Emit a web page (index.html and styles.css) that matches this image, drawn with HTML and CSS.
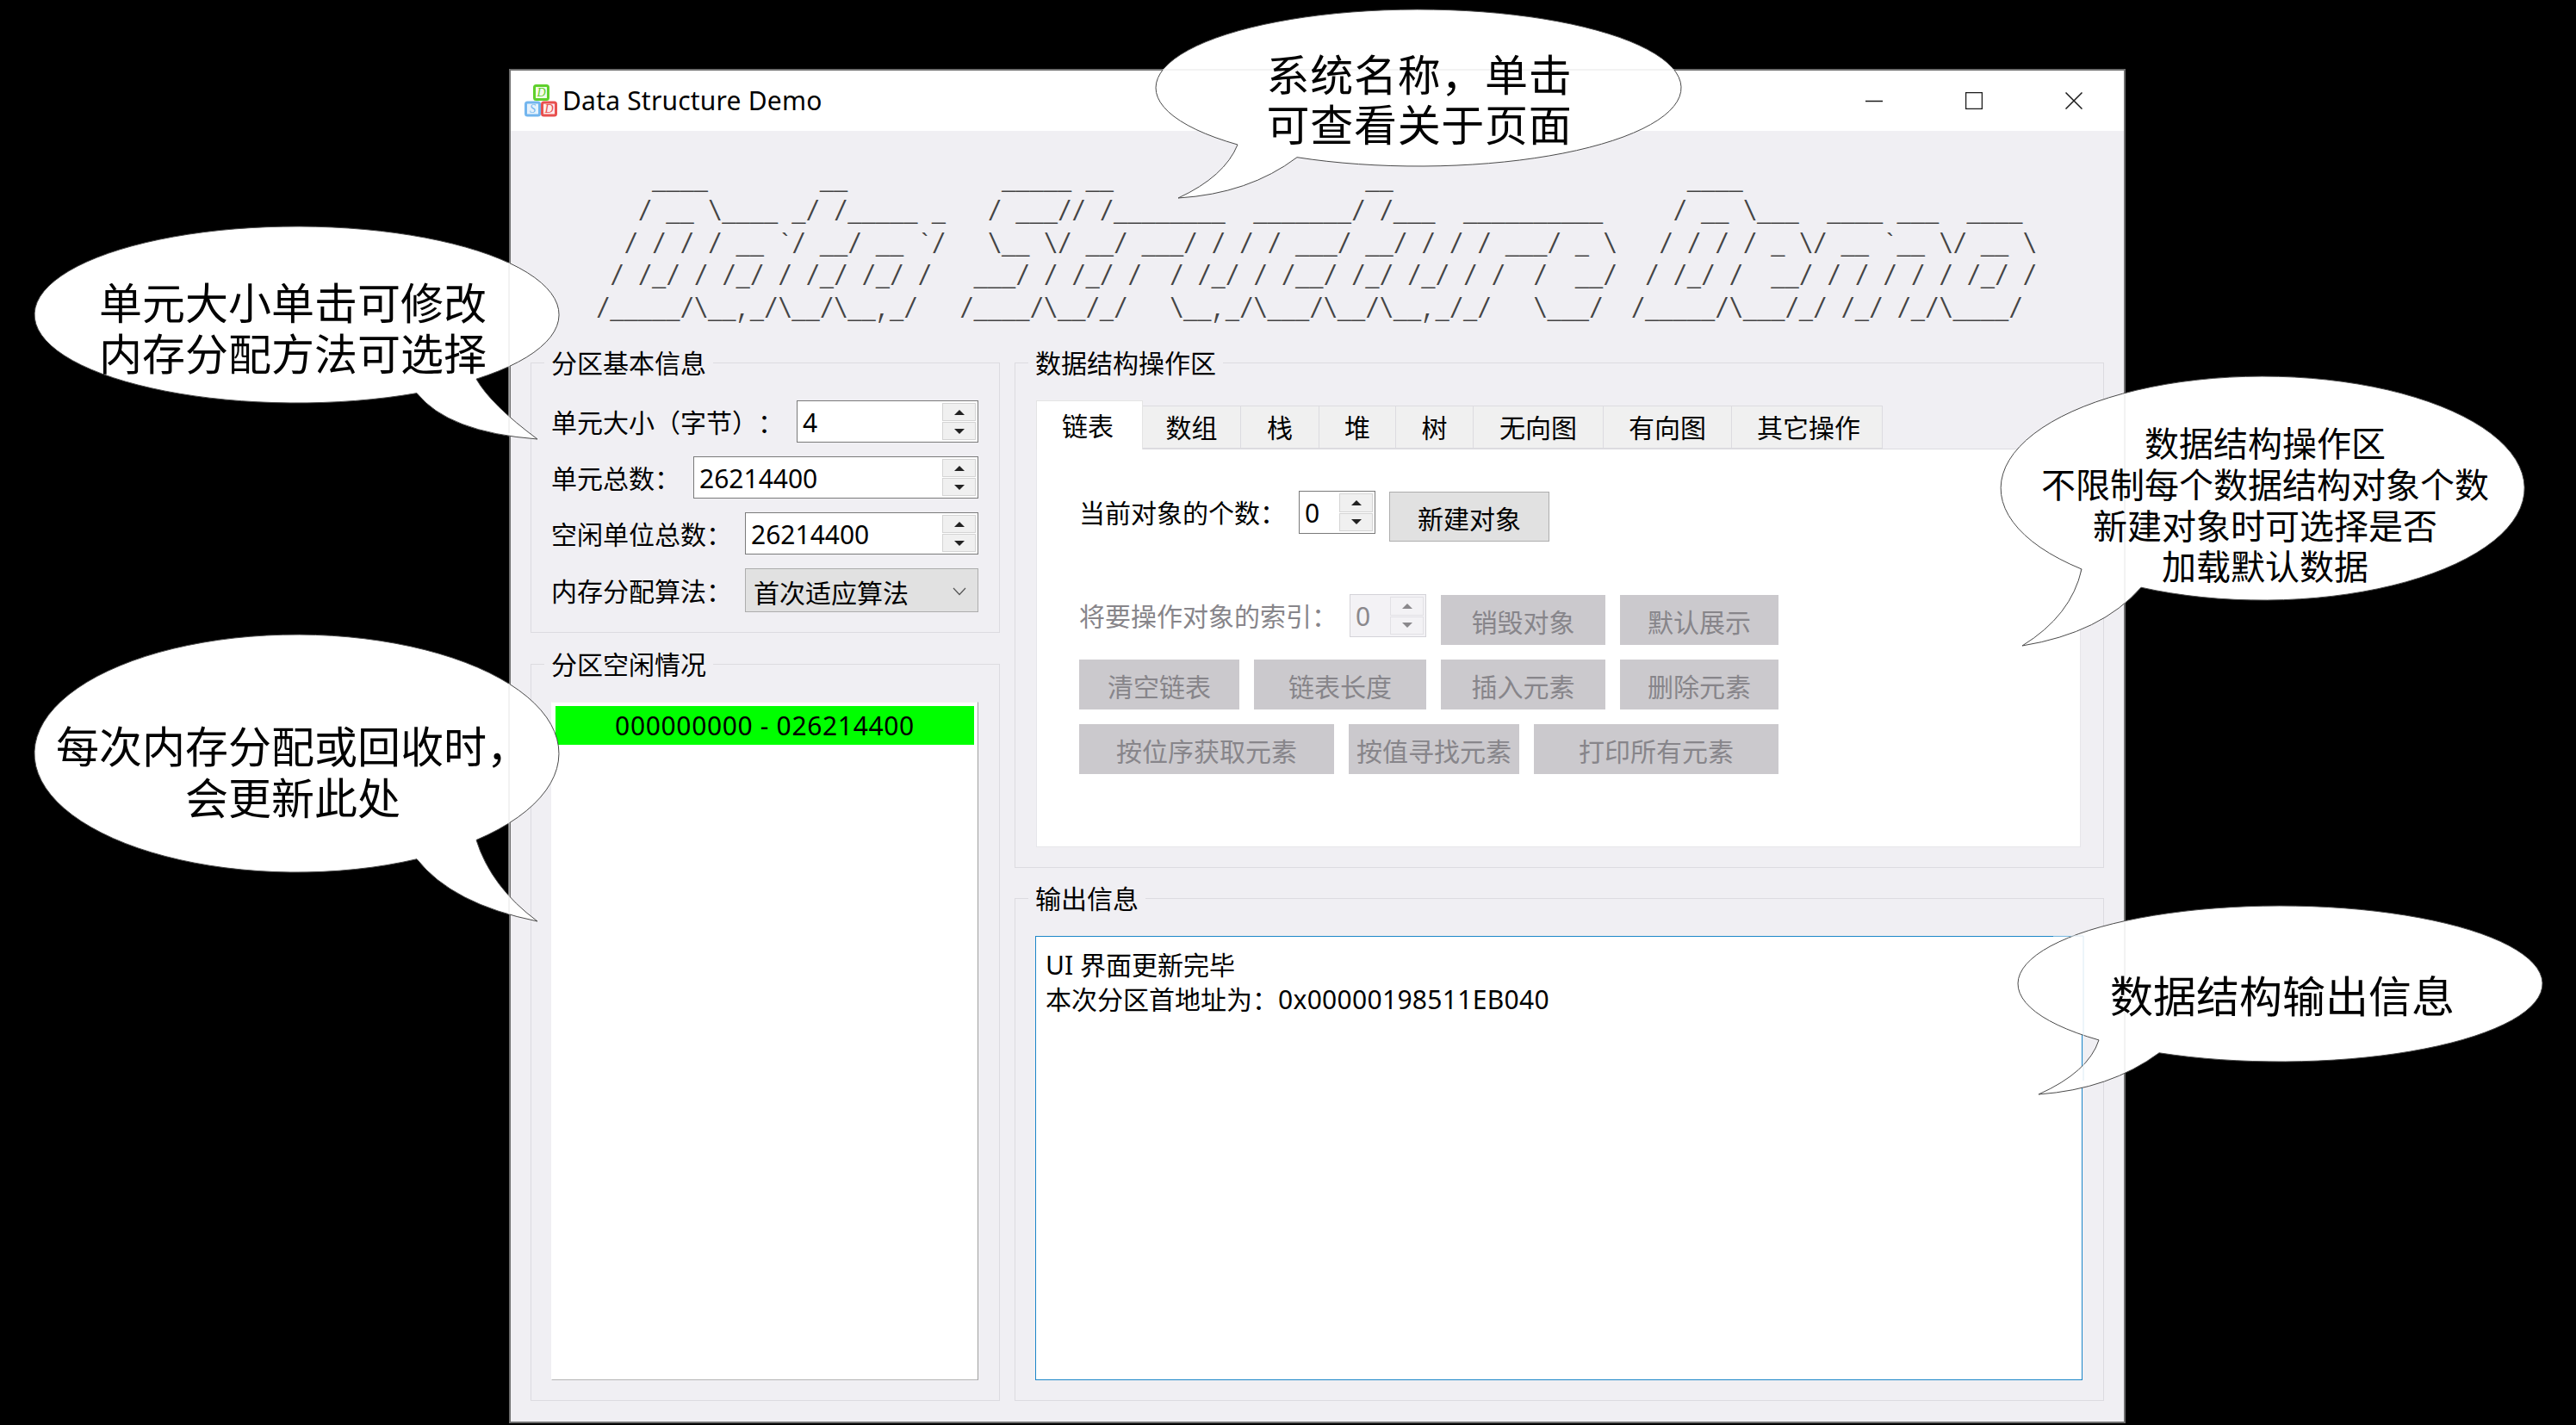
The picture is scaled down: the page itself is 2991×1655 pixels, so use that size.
FILE: index.html
```html
<!DOCTYPE html>
<html lang="zh-CN">
<head>
    <meta charset="UTF-8">
    <title>Data Structure Demo</title>
    <link rel="stylesheet" href="styles.css">
</head>
<body>
<div class="window">
    <div class="titlebar">
        <svg class="app-icon" width="38" height="38" viewBox="0 0 38 38">
            <rect class="cube-green" x="11.5" y="1.5" width="16" height="16" rx="2"/>
            <rect class="cube-blue" x="1.5" y="21" width="16" height="15" rx="2"/>
            <rect class="cube-red" x="20.5" y="21" width="16" height="15" rx="2"/>
            <text class="cube-letter cube-letter-green" x="19.5" y="14">D</text>
            <text class="cube-letter cube-letter-blue" x="9.5" y="33">S</text>
            <text class="cube-letter cube-letter-red" x="28.5" y="33">D</text>
        </svg>
        <span class="app-title">Data Structure Demo</span>
        <div class="win-controls">
            <div class="win-btn">
                <svg width="20" height="20" viewBox="0 0 20 20"><path d="M0 10.5H20"/></svg>
            </div>
            <div class="win-btn">
                <svg width="20" height="20" viewBox="0 0 20 20"><path d="M0.5 0.5H19.5V19.5H0.5Z"/></svg>
            </div>
            <div class="win-btn">
                <svg width="20" height="20" viewBox="0 0 20 20"><path d="M0.5 0.5L19.5 19.5M19.5 0.5L0.5 19.5"/></svg>
            </div>
        </div>
    </div>

    <div class="client">
<pre class="art">    ____        __           _____ __                  __                     ____
   / __ \____ _/ /_____ _   / ___// /________  _______/ /___  __________     / __ \___  ____ ___  ____
  / / / / __ `/ __/ __ `/   \__ \/ __/ ___/ / / / ___/ __/ / / / ___/ _ \   / / / / _ \/ __ `__ \/ __ \
 / /_/ / /_/ / /_/ /_/ /   ___/ / /_/ /  / /_/ / /__/ /_/ /_/ / /  /  __/  / /_/ /  __/ / / / / / /_/ /
/_____/\__,_/\__/\__,_/   /____/\__/_/   \__,_/\___/\__/\__,_/_/   \___/  /_____/\___/_/ /_/ /_/\____/</pre>

        <div class="columns">
            <div class="col-left">
                <div class="group group-info">
                    <div class="group-title">分区基本信息</div>
                    <div class="form-rows">
                        <div class="form-row">
                            <label>单元大小（字节）：</label>
                            <div class="spin"><span class="spin-val">4</span><div class="spin-btns"><span class="spin-up"><i></i></span><span class="spin-down"><i></i></span></div></div>
                        </div>
                        <div class="form-row">
                            <label>单元总数：</label>
                            <div class="spin"><span class="spin-val">26214400</span><div class="spin-btns"><span class="spin-up"><i></i></span><span class="spin-down"><i></i></span></div></div>
                        </div>
                        <div class="form-row">
                            <label>空闲单位总数：</label>
                            <div class="spin"><span class="spin-val">26214400</span><div class="spin-btns"><span class="spin-up"><i></i></span><span class="spin-down"><i></i></span></div></div>
                        </div>
                        <div class="form-row">
                            <label>内存分配算法：</label>
                            <div class="combo">
                                <span>首次适应算法</span>
                                <svg width="16" height="10" viewBox="0 0 16 10"><path d="M1 1L8 8.5L15 1"/></svg>
                            </div>
                        </div>
                    </div>
                </div>

                <div class="group group-free">
                    <div class="group-title">分区空闲情况</div>
                    <div class="free-list">
                        <div class="free-item">000000000 - 026214400</div>
                    </div>
                </div>
            </div>

            <div class="col-right">
                <div class="group group-ops">
                    <div class="group-title">数据结构操作区</div>
                    <div class="tabs">
                        <div class="tab tab-active">链表</div>
                        <div class="tab">数组</div>
                        <div class="tab">栈</div>
                        <div class="tab">堆</div>
                        <div class="tab">树</div>
                        <div class="tab">无向图</div>
                        <div class="tab">有向图</div>
                        <div class="tab tab-last">其它操作</div>
                    </div>
                    <div class="pane">
                        <div class="object-row">
                            <label>当前对象的个数：</label>
                            <div class="spin spin-small"><span class="spin-val">0</span><div class="spin-btns"><span class="spin-up"><i></i></span><span class="spin-down"><i></i></span></div></div>
                            <button class="btn btn-new">新建对象</button>
                        </div>
                        <div class="op-grid">
                            <div class="op-index span-3">
                                <label class="disabled-label">将要操作对象的索引：</label>
                                <div class="spin spin-small spin-disabled"><span class="spin-val">0</span><div class="spin-btns"><span class="spin-up"><i></i></span><span class="spin-down"><i></i></span></div></div>
                            </div>
                            <button class="btn span-2" disabled>销毁对象</button>
                            <button class="btn" disabled>默认展示</button>

                            <button class="btn" disabled>清空链表</button>
                            <button class="btn span-2" disabled>链表长度</button>
                            <button class="btn span-2" disabled>插入元素</button>
                            <button class="btn" disabled>删除元素</button>

                            <button class="btn span-2" disabled>按位序获取元素</button>
                            <button class="btn span-2" disabled>按值寻找元素</button>
                            <button class="btn span-2" disabled>打印所有元素</button>
                        </div>
                    </div>
                </div>

                <div class="group group-output">
                    <div class="group-title">输出信息</div>
                    <div class="output-box">
                        <div>UI 界面更新完毕</div>
                        <div>本次分区首地址为：<span class="hex">0x00000198511EB040</span></div>
                    </div>
                </div>
            </div>
        </div>
    </div>
</div>

<!-- 说明气泡 -->
<svg class="bubbles" width="2991" height="1655" viewBox="0 0 2991 1655">
    <path class="bubble" d="M1506 182.7A305 91 0 1 0 1437 168Q1422 205 1368 230Q1450 225 1506 182.7Z"/>
    <path class="show-through" d="M1350 81H1944"/>
    <text class="bubble-text bubble-text-wide" x="1648" y="84">系统名称，单击</text>
    <text class="bubble-text bubble-text-wide" x="1648" y="142">可查看关于页面</text>

    <path class="bubble" d="M553 440.2A304.5 102.5 0 1 0 484 456.6Q520 502 624 510Q570 470 553 440.2Z"/>
    <path class="show-through" d="M591 305V503"/>
    <text class="bubble-text" x="340" y="349">单元大小单击可修改</text>
    <text class="bubble-text" x="340" y="408">内存分配方法可选择</text>

    <path class="bubble" d="M553 975.6A304.5 138 0 1 0 484 997.7Q525 1050 624 1070Q570 1030 553 975.6Z"/>
    <path class="show-through" d="M591 794V1062"/>
    <text class="bubble-text" x="340" y="864">每次内存分配或回收时，</text>
    <text class="bubble-text" x="340" y="924">会更新此处</text>

    <path class="bubble" d="M2486 682.2A304 130 0 1 0 2417 661Q2405 715 2348 750Q2440 735 2486 682.2Z"/>
    <path class="show-through" d="M2467 457V700"/>
    <text class="bubble-text bubble-text-small" x="2630" y="513">数据结构操作区</text>
    <text class="bubble-text bubble-text-small" x="2630" y="561">不限制每个数据结构对象个数</text>
    <text class="bubble-text bubble-text-small" x="2630" y="609">新建对象时可选择是否</text>
    <text class="bubble-text bubble-text-small" x="2630" y="656">加载默认数据</text>

    <path class="bubble" d="M2507 1222.8A304.5 90.5 0 1 0 2437 1207.9Q2425 1245 2367 1271Q2450 1265 2507 1222.8Z"/>
    <path class="show-through" d="M2467 1070V1245"/>
    <path class="show-through-blue" d="M2384 1087H2419V1255"/>
    <text class="bubble-text" x="2650" y="1154">数据结构输出信息</text>
</svg>
</body>
</html>
```

FILE: styles.css
```css
html, body {
    margin: 0;
    padding: 0;
    background-color: #000000;
}

body {
    position: relative;
    width: 2991px;
    height: 1655px;
    overflow: hidden;
    font-family: "Noto Sans", "Noto Sans CJK SC", sans-serif;
    font-size: 30px;
    color: #000000;
    text-spacing-trim: space-all;
}

/* 窗口 */
.window {
    position: absolute;
    left: 591px;
    top: 80px;
    width: 1877px;
    height: 1573px;
    box-sizing: border-box;
    border: 2px solid #6e6e6e;
    display: flex;
    flex-direction: column;
    background-color: #f0eff3;
}

.titlebar {
    height: 70px;
    display: flex;
    align-items: center;
    padding-left: 16px;
    background-color: #ffffff;
    flex-shrink: 0;
}

.app-icon {
    margin-right: 6px;
}

.cube-green { fill: #f3fbe9; stroke: #5fd02c; stroke-width: 3; }
.cube-blue { fill: #e6f2fc; stroke: #72b5ee; stroke-width: 3; }
.cube-red { fill: #fdecec; stroke: #e8504f; stroke-width: 3; }

.cube-letter {
    font-family: "Liberation Serif", serif;
    font-style: italic;
    font-size: 14px;
    text-anchor: middle;
}
.cube-letter-green { fill: #5fd02c; }
.cube-letter-blue { fill: #72b5ee; }
.cube-letter-red { fill: #e8504f; }

.app-title {
    line-height: 40px;
    letter-spacing: 0.2px;
}

.win-controls {
    margin-left: auto;
    display: flex;
}

.win-btn {
    width: 116px;
    height: 60px;
    display: flex;
    align-items: center;
    justify-content: center;
}

.win-btn svg {
    fill: none;
    stroke: #1a1a1a;
    stroke-width: 1.5;
}

.client {
    flex: 1;
    display: flex;
    flex-direction: column;
    padding: 40px 23px 24px 23px;
    min-height: 0;
}

/* 标题字符画 */
.art {
    margin: 0 0 42px 76px;
    font-family: "Liberation Mono", monospace;
    font-size: 34px;
    line-height: 37.4px;
    color: #444444;
    transform: scaleX(0.796);
    transform-origin: left top;
}

.columns {
    flex: 1;
    display: flex;
    gap: 17px;
    min-height: 0;
}

.col-left {
    width: 545px;
    display: flex;
    flex-direction: column;
    gap: 36px;
}

.col-right {
    flex: 1;
    display: flex;
    flex-direction: column;
    gap: 35px;
}

/* 分组框 */
.group {
    box-sizing: border-box;
    border: 1px solid #dcdbe0;
    display: flex;
    flex-direction: column;
    padding: 0 24px 23px 23px;
}

.group-title {
    align-self: flex-start;
    margin: -21px 0 22px -8px;
    padding: 0 8px;
    height: 42px;
    line-height: 42px;
    background-color: #f0eff3;
}

.group-info { height: 314px; }
.group-free { flex: 1; min-height: 0; }
.group-ops { height: 587px; padding-right: 26px; }
.group-output { flex: 1; min-height: 0; }

/* 表单 */
.form-rows {
    display: flex;
    flex-direction: column;
    gap: 16px;
}

.form-row {
    display: flex;
    align-items: center;
    gap: 15px;
}

label {
    white-space: nowrap;
    line-height: 47px;
    padding-top: 2px;
}

.spin {
    flex: 1;
    height: 49px;
    box-sizing: border-box;
    border: 1px solid #7a7a7a;
    background-color: #ffffff;
    display: flex;
    align-items: center;
    padding: 2px;
}

.spin-val {
    flex: 1;
    padding: 2px 0 0 4px;
    line-height: 40px;
}

.spin-btns {
    width: 39px;
    height: 100%;
    display: flex;
    flex-direction: column;
    gap: 1px;
    background-color: #ffffff;
}

.spin-up, .spin-down {
    flex: 1;
    box-sizing: border-box;
    background-color: #f0f0f0;
    border: 1px solid #d4d4d4;
    display: flex;
    align-items: center;
    justify-content: center;
}

.spin-up i {
    width: 0;
    height: 0;
    border-left: 6px solid transparent;
    border-right: 6px solid transparent;
    border-bottom: 6px solid #222222;
}

.spin-down i {
    width: 0;
    height: 0;
    border-left: 6px solid transparent;
    border-right: 6px solid transparent;
    border-top: 6px solid #222222;
}

.spin-small {
    flex: none;
    width: 89px;
    height: 50px;
}

.spin-disabled {
    border-color: #d4d3d8;
    background-color: #f3f2f5;
    color: #8a888c;
}

.spin-disabled .spin-btns {
    background-color: #f3f2f5;
}

.spin-disabled .spin-up, .spin-disabled .spin-down {
    background-color: #f3f2f5;
    border-color: #e2e1e5;
}

.spin-disabled .spin-up i { border-bottom-color: #8a888c; }
.spin-disabled .spin-down i { border-top-color: #8a888c; }

.combo {
    flex: 1;
    height: 51px;
    box-sizing: border-box;
    border: 1px solid #adadad;
    background-color: #e1e1e1;
    display: flex;
    align-items: center;
    justify-content: space-between;
    padding: 2px 13px 0 9px;
}

.combo svg {
    fill: none;
    stroke: #555555;
    stroke-width: 1.2;
}

/* 空闲列表 */
.free-list {
    flex: 1;
    background-color: #ffffff;
    border: 1px solid #f3f3f3;
    border-left-color: transparent;
    border-right-color: #a0a0a0;
    border-bottom-color: #b4b4b4;
    padding: 4px;
}

.free-item {
    height: 45px;
    line-height: 45px;
    background-color: #00ff00;
    text-align: center;
    letter-spacing: 0.65px;
}

/* 选项卡 */
.tabs {
    display: grid;
    grid-template-columns: 124px 114px 91px 89px 90px 151px 149px 175px;
    align-items: end;
    justify-content: start;
    height: 56px;
    margin-left: 1px;
}

.tab {
    box-sizing: border-box;
    height: 50px;
    line-height: 50px;
    text-align: center;
    background-color: #f0f0f0;
    border: 1px solid #dcdbe0;
    border-left: none;
}

.tab-active {
    height: 57px;
    margin-bottom: -1px;
    line-height: 57px;
    padding-right: 4px;
    background-color: #ffffff;
    border: 1px solid #e4e4e4;
    border-bottom: none;
    position: relative;
}

.tab-last {
    padding-left: 4px;
}

.pane {
    flex: 1;
    margin-left: 1px;
    background-color: #ffffff;
    border: 1px solid #e6e6ea;
    border-top-color: #dcdbe0;
    padding: 48px 0 0 49px;
}

.object-row {
    display: flex;
    align-items: flex-start;
    gap: 15px;
    height: 59px;
}

.btn {
    font-family: inherit;
    font-size: 30px;
    height: 58px;
    padding: 2px 0 0;
    color: #000000;
    background-color: #e1e1e1;
    border: 1px solid #adadad;
    box-sizing: border-box;
    text-spacing-trim: space-all;
}

.btn:disabled {
    color: #87858a;
    background-color: #cbc9cd;
    border-color: #cbc9cd;
}

.btn-new {
    width: 186px;
    margin: 1px 0 0 1px;
}

.op-grid {
    margin-top: 62px;
    display: grid;
    grid-template-columns: 186px 93px 90px 91px 83px 184px;
    grid-auto-rows: 58px;
    gap: 17px;
}

.span-2 { grid-column: span 2; }
.span-3 { grid-column: span 3; }

.op-index {
    display: flex;
    justify-content: space-between;
    align-items: flex-start;
    margin-top: -1px;
}

.disabled-label {
    color: #87858a;
}

/* 输出 */
.output-box {
    flex: 1;
    background-color: #ffffff;
    border: 1px solid #1c86c8;
    padding: 13px 11px;
    line-height: 40px;
}

.hex {
    letter-spacing: 0.3px;
}

/* 气泡 */
.bubbles {
    position: absolute;
    left: 0;
    top: 0;
}

.bubble {
    fill: #ffffff;
    stroke: #4a4a4a;
    stroke-width: 1;
}

.show-through {
    fill: none;
    stroke: #e6e6e6;
    stroke-width: 1;
}

.show-through-blue {
    fill: none;
    stroke: #dcebf5;
    stroke-width: 1;
}

.bubble-text {
    font-family: "Noto Sans CJK SC", sans-serif;
    font-size: 50px;
    text-anchor: middle;
    dominant-baseline: central;
    fill: #000000;
}

.bubble-text-wide {
    letter-spacing: 0.7px;
}

.bubble-text-small {
    font-size: 40px;
}
```
